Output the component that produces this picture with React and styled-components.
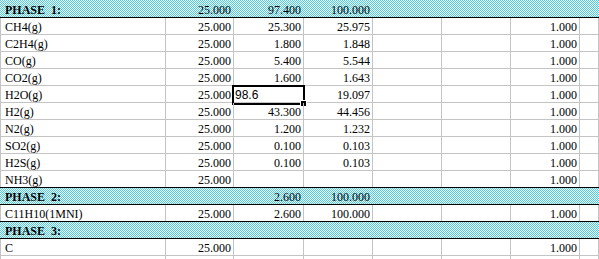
import React from "react";
import styled, { createGlobalStyle, css } from "styled-components";

const Global = createGlobalStyle`
  html, body { margin: 0; padding: 0; background: #ffffff; }
  body { font-family: "Liberation Serif", "Times New Roman", serif; }
`;

const GRID = "#c4c4c4";
const DOT = "#45d2e8";

const Sheet = styled.div`
  width: 599px;
  height: 259px;
  overflow: hidden;
  background: #ffffff;
  font-family: "Liberation Serif", "Times New Roman", serif;
  font-size: 12px;
  color: #000000;
`;

const Row = styled.div`
  position: relative;
  display: grid;
  grid-template-columns: 166px 68px 70px 69px 69px 69px 69px 1fr;
  height: ${(p) => (p.$first ? 18 : 17)}px;
  box-sizing: border-box;
  border-bottom: 1px solid ${(p) => (p.$dark ? "#000000" : GRID)};
  ${(p) =>
    p.$phase &&
    css`
      background-color: #ffffff;
      background-image: linear-gradient(to right, ${DOT} 1px, #ffffff 1px);
      background-size: 2px 2px;
      &::before {
        content: "";
        position: absolute;
        inset: 0;
        background-image: linear-gradient(to right, #ffffff 1px, ${DOT} 1px);
        background-size: 2px 2px;
        -webkit-mask-image: linear-gradient(to bottom, transparent 1px, #000 1px);
        -webkit-mask-size: 2px 2px;
        mask-image: linear-gradient(to bottom, transparent 1px, #000 1px);
        mask-size: 2px 2px;
        z-index: 0;
      }
    `}
`;

const Cell = styled.div`
  position: relative;
  z-index: 1;
  box-sizing: border-box;
  border-right: 1px solid ${(p) => (p.$phase ? "transparent" : GRID)};
  ${(p) => p.$leftEdge && css`border-left: 1px solid ${p.$phase ? "transparent" : GRID};`}
  padding: ${(p) => (p.$first ? 3 : 2)}px 2px 0 4px;
  line-height: 14px;
  white-space: pre;
  overflow: visible;
  text-align: ${(p) => (p.$num ? "right" : "left")};
  font-weight: ${(p) => (p.$bold ? 700 : 400)};
`;

const Selection = styled.div`
  position: absolute;
  left: -2px;
  top: -1px;
  width: 73px;
  height: 20px;
  box-sizing: border-box;
  border: 2px solid #000000;
  pointer-events: none;
  z-index: 2;
`;

const FillHandle = styled.div`
  position: absolute;
  left: 67px;
  top: 15px;
  width: 5px;
  height: 5px;
  background: #000000;
  border: 1px solid #ffffff;
  box-sizing: content-box;
  margin: -1px 0 0 -1px;
  z-index: 3;
`;

const EditText = styled.span`
  position: relative;
  z-index: 4;
  margin-left: -3px;
  font-family: "Liberation Sans", Arial, sans-serif;
  font-size: 12px;
`;

const rows = [
  { phase: true, cells: ["PHASE  1:", "25.000", "97.400", "100.000", "", "", "", ""] },
  { cells: ["CH4(g)", "25.000", "25.300", "25.975", "", "", "1.000", ""] },
  { cells: ["C2H4(g)", "25.000", "1.800", "1.848", "", "", "1.000", ""] },
  { cells: ["CO(g)", "25.000", "5.400", "5.544", "", "", "1.000", ""] },
  { cells: ["CO2(g)", "25.000", "1.600", "1.643", "", "", "1.000", ""] },
  { cells: ["H2O(g)", "25.000", "98.6", "19.097", "", "", "1.000", ""], edit: 2 },
  { cells: ["H2(g)", "25.000", "43.300", "44.456", "", "", "1.000", ""] },
  { cells: ["N2(g)", "25.000", "1.200", "1.232", "", "", "1.000", ""] },
  { cells: ["SO2(g)", "25.000", "0.100", "0.103", "", "", "1.000", ""] },
  { cells: ["H2S(g)", "25.000", "0.100", "0.103", "", "", "1.000", ""] },
  { cells: ["NH3(g)", "25.000", "", "", "", "", "1.000", ""] },
  { phase: true, cells: ["PHASE  2:", "", "2.600", "100.000", "", "", "", ""] },
  { cells: ["C11H10(1MNI)", "25.000", "2.600", "100.000", "", "", "1.000", ""] },
  { phase: true, cells: ["PHASE  3:", "", "", "", "", "", "", ""] },
  { cells: ["C", "25.000", "", "", "", "", "1.000", ""] },
  { cells: ["", "", "", "", "", "", "", ""] },
];

export default function App() {
  return (
    <>
      <Global />
      <Sheet>
        {rows.map((r, i) => {
          const next = rows[i + 1];
          const dark = r.phase || (next && next.phase);
          return (
            <Row key={i} $phase={r.phase} $dark={dark} $first={i === 0}>
              {r.cells.map((c, j) => {
                const isEdit = r.edit === j;
                return (
                  <Cell
                    key={j}
                    $phase={r.phase}
                    $leftEdge={j === 0}
                    $first={i === 0}
                    $num={j > 0 && !isEdit}
                    $bold={r.phase && j === 0}
                  >
                    {isEdit ? (
                      <>
                        <Selection />
                        <FillHandle />
                        <EditText>{c}</EditText>
                      </>
                    ) : (
                      c
                    )}
                  </Cell>
                );
              })}
            </Row>
          );
        })}
      </Sheet>
    </>
  );
}
